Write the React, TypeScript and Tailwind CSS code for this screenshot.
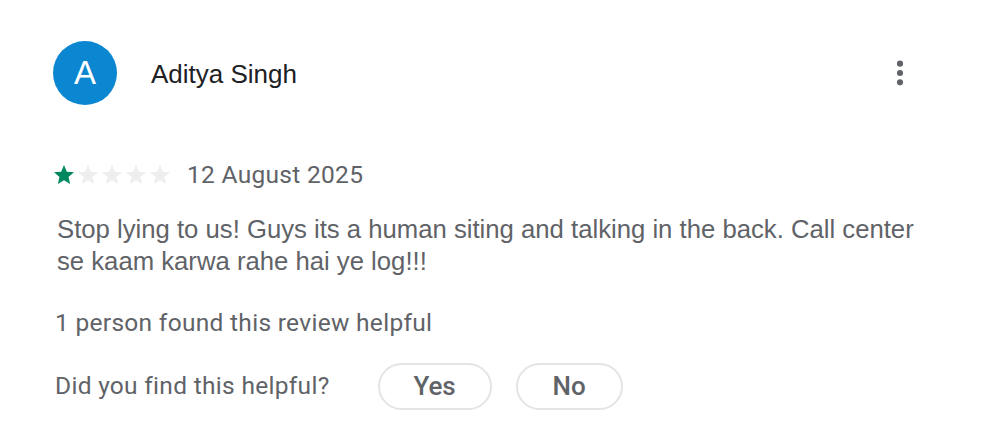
import React from "react";

const Star: React.FC<{ filled: boolean }> = ({ filled }) => (
  <svg viewBox="0 0 24 24" className="w-6 h-6">
    <path
      d="M12 17.27L18.18 21l-1.64-7.03L22 9.24l-7.19-.61L12 2 9.19 8.63 2 9.24l5.46 4.73L5.82 21z"
      fill={filled ? "#01875f" : "#eceef0"}
    />
  </svg>
);

const App: React.FC = () => {
  return (
    <div className="w-[1000px] h-[439px] bg-white pl-[53px] pr-[84px] pt-[41px] font-['Roboto',sans-serif] text-[#5f6368]">
      <header className="flex items-center justify-between">
        <div className="flex items-center">
          <div className="w-16 h-16 rounded-full bg-[#0b86d0] flex items-center justify-center text-white text-[33px] font-['Liberation_Sans',sans-serif]">
            A
          </div>
          <span className="ml-[34px] mt-[2px] text-[26px] text-[#202124] font-['Liberation_Sans',sans-serif]">
            Aditya Singh
          </span>
        </div>
        <svg viewBox="0 0 24 24" className="w-8 h-8 -mt-[1px]" fill="#5f6368">
          <circle cx="12" cy="5" r="2.3" />
          <circle cx="12" cy="12" r="2.3" />
          <circle cx="12" cy="19" r="2.3" />
        </svg>
      </header>

      <div className="flex items-center mt-[52px]">
        <div className="flex -ml-[1px]">
          <Star filled />
          <Star filled={false} />
          <Star filled={false} />
          <Star filled={false} />
          <Star filled={false} />
        </div>
        <span className="ml-[15px] text-[24.5px] tracking-[0.3px]">12 August 2025</span>
      </div>

      <p className="mt-[19px] ml-[4px] text-[25.7px] leading-[32px] whitespace-nowrap font-['Liberation_Sans',sans-serif]">
        Stop lying to us! Guys its a human siting and talking in the back. Call center
        <br />
        se kaam karwa rahe hai ye log!!!
      </p>

      <p className="mt-[28px] ml-[2px] text-[24.5px] tracking-[0.3px]">
        1 person found this review helpful
      </p>

      <div className="flex items-center mt-[21px] ml-[2px]">
        <span className="text-[24.5px] tracking-[0.3px]">Did you find this helpful?</span>
        <button className="ml-[48px] w-[114px] h-[47px] rounded-full border-2 border-[#e3e4e6] text-[26px] font-medium text-[#5f6368]">
          Yes
        </button>
        <button className="ml-[24px] w-[107px] h-[47px] rounded-full border-2 border-[#e3e4e6] text-[26px] font-medium text-[#5f6368]">
          No
        </button>
      </div>
    </div>
  );
};

export default App;
